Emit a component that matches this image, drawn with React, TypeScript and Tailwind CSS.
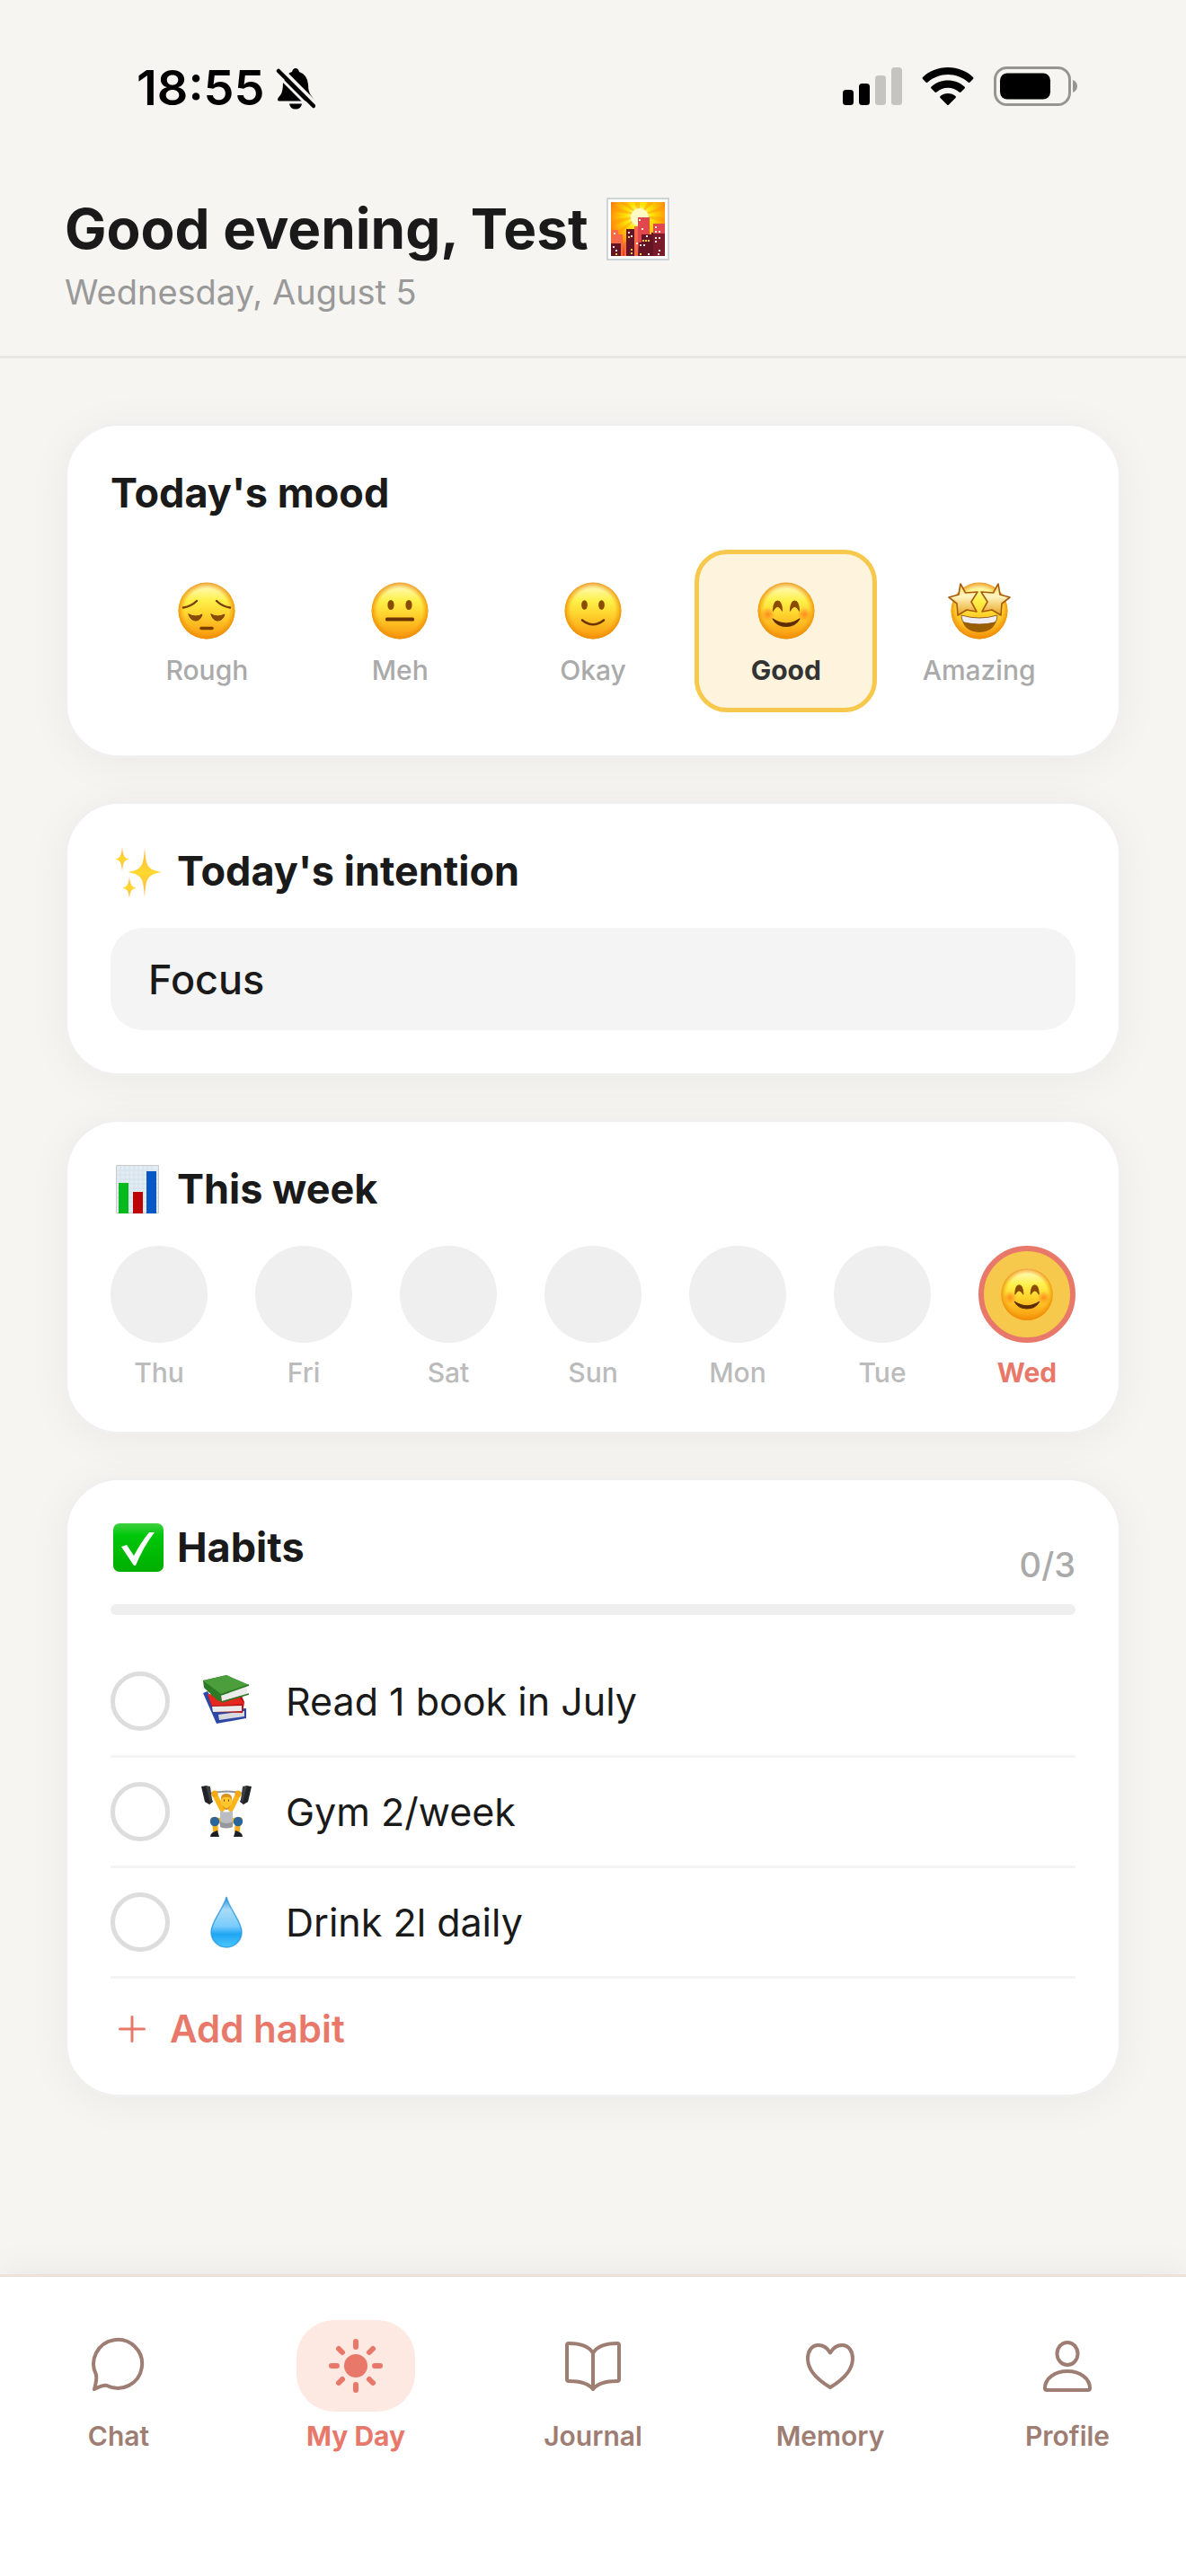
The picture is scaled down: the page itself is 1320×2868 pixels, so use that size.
import { useState, type ReactNode } from "react"

type MoodName = "Rough" | "Meh" | "Okay" | "Good" | "Amazing"

const moods: MoodName[] = ["Rough", "Meh", "Okay", "Good", "Amazing"]
const days = ["Thu", "Fri", "Sat", "Sun", "Mon", "Tue", "Wed"]

const features: Record<MoodName, ReactNode> = {
  Rough: (
    <g fill="none" stroke="#7a3f00" strokeLinecap="round">
      <path d="M10 32.500Q19 31 25 25M62 32.500Q53 31 47 25" strokeWidth="2.4" />
      <path d="M16 40Q24 44 31 40Q29 47 24 47Q18 47 16 40ZM41 40Q48 44 56 40Q54 47 48 47Q43 47 41 40Z" fill="#8a4c02" strokeWidth="1" />
      <path d="M30 55.500h12" strokeWidth="3.600" />
    </g>
  ),
  Meh: (
    <g fill="#8a4c02">
      <ellipse cx="26" cy="29.500" rx="3.600" ry="5.600" />
      <ellipse cx="46" cy="29.500" rx="3.600" ry="5.600" />
      <rect x="20" y="43.500" width="32" height="4" rx="1.500" fill="#6b3400" />
    </g>
  ),
  Okay: (
    <g fill="#8a4c02">
      <ellipse cx="26.500" cy="29.500" rx="3.400" ry="5.200" />
      <ellipse cx="45.500" cy="29.500" rx="3.400" ry="5.200" />
      <path d="M24 46.500Q36 56 48 46.500" fill="none" stroke="#6b3400" strokeWidth="2.600" strokeLinecap="round" />
    </g>
  ),
  Good: (
    <g>
      <circle cx="15.500" cy="40" r="8" fill="url(#blush)" />
      <circle cx="56.500" cy="40" r="8" fill="url(#blush)" />
      <path d="M21.500 36Q22 25 26.500 25Q31 25 31.500 36Q26.500 27 21.500 36ZM40.500 36Q41 25 45.500 25Q50 25 50.500 36Q45.500 27 40.500 36Z" fill="#8a4c02" stroke="#8a4c02" strokeWidth="1.200" strokeLinejoin="round" />
      <path d="M21 45Q36 55 51 45Q46 53.500 36 53.500Q26 53.500 21 45Z" fill="#5d2d00" stroke="#5d2d00" strokeWidth="1.200" strokeLinejoin="round" />
    </g>
  ),
  Amazing: (
    <g>
      <path d="M16 41Q36 47 56 41Q55 59 36 60Q17 59 16 41Z" fill="#9a5f06" />
      <path d="M16 41Q36 47 56 41Q56 47 53 49Q36 53 19 49Q16 47 16 41Z" fill="#eeeef4" stroke="#8a4c02" strokeWidth=".8" />
      <path d="M15 6L20.500 16L34 15L27 26L33 37L22 35L12 41L11 28L2 21L13 18Z" fill="url(#star)" stroke="#a85a0c" strokeWidth="1.600" strokeLinejoin="round" />
      <path d="M57 6L51.500 16L38 15L45 26L39 37L50 35L60 41L61 28L70 21L59 18Z" fill="url(#star)" stroke="#a85a0c" strokeWidth="1.600" strokeLinejoin="round" />
    </g>
  ),
}

function EmojiGradients() {
  return (
    <svg className="absolute size-0" aria-hidden="true">
      <defs>
        <linearGradient id="face" x1="0" y1="0" x2="0" y2="1">
          <stop offset="0" stopColor="#fffbd0" />
          <stop offset=".32" stopColor="#fff04a" />
          <stop offset=".55" stopColor="#ffd52f" />
          <stop offset="1" stopColor="#f8940c" />
        </linearGradient>
        <radialGradient id="rim">
          <stop offset=".78" stopColor="#f59a0b" stopOpacity="0" />
          <stop offset="1" stopColor="#ec8a08" stopOpacity=".85" />
        </radialGradient>
        <radialGradient id="blush">
          <stop offset="0" stopColor="#ff7a1a" stopOpacity=".8" />
          <stop offset="1" stopColor="#ff7a1a" stopOpacity="0" />
        </radialGradient>
        <linearGradient id="star" x1="0" y1="0" x2="0" y2="1">
          <stop offset="0" stopColor="#ffdf66" />
          <stop offset=".4" stopColor="#fff4c0" />
          <stop offset="1" stopColor="#e8a31c" />
        </linearGradient>
        <radialGradient id="sky" cx=".52" cy=".28" r=".8">
          <stop offset=".1" stopColor="#fffbb0" />
          <stop offset=".3" stopColor="#ffe400" />
          <stop offset=".6" stopColor="#ffa00a" />
          <stop offset=".9" stopColor="#f4400a" />
        </radialGradient>
        <linearGradient id="check" x1="0" y1="0" x2="0" y2="1">
          <stop offset="0" stopColor="#3fd03f" />
          <stop offset=".25" stopColor="#00c70a" />
          <stop offset="1" stopColor="#00ad00" />
        </linearGradient>
        <linearGradient id="sparkle" x1="0" y1="0" x2="0" y2="1">
          <stop offset="0" stopColor="#ffb13b" />
          <stop offset=".5" stopColor="#ffd92e" />
          <stop offset="1" stopColor="#ffb155" />
        </linearGradient>
        <linearGradient id="drop" x1="0" y1="0" x2="0" y2="1">
          <stop offset="0" stopColor="#2a93d8" />
          <stop offset=".25" stopColor="#a9dcf7" />
          <stop offset=".58" stopColor="#7accfb" />
          <stop offset=".74" stopColor="#1fa6f4" />
          <stop offset="1" stopColor="#4cc6fa" />
        </linearGradient>
      </defs>
    </svg>
  )
}

function Face({ mood, className }: { mood: MoodName; className: string }) {
  return (
    <svg viewBox="0 0 72 72" className={className} aria-hidden="true">
      <circle cx="36" cy="36" r="31.500" fill="url(#face)" />
      <circle cx="36" cy="36" r="31.500" fill="url(#rim)" />
      {features[mood]}
    </svg>
  )
}

function CityPicture() {
  return (
    <svg viewBox="0 0 70 70" className="size-[70px]" aria-hidden="true">
      <rect x="1" y="1" width="68" height="68" fill="#fff" stroke="#c3cccf" strokeWidth="1.600" />
      <rect x="5" y="5" width="60" height="60" fill="url(#sky)" />
      <path
        d="M37 20L5 8V15ZM37 20L14 5H22ZM37 20L31 5H37ZM37 20L46 5H53ZM37 20L65 8V14ZM37 20L65 22V28ZM37 20L5 25V32ZM37 20L5 42V50Z"
        fill="#ff8a0a"
        opacity=".4"
      />
      <circle cx="37" cy="22" r="10" fill="#fffbc4" />
      <path d="M6 36h7v5h5v24H5ZM20 50h5v15h-5ZM31 32h4v33h-4Z" fill="#f4694a" />
      <path d="M35 22h13v43H35ZM52 29h13v36H52Z" fill="#e2474f" />
      <path d="M5 51h11v14H5ZM22 35h9v30h-9ZM36 50h3v-9h11v-2h2v2h13v24H35Z" fill="#641525" />
      <path d="M52 40h13v25H52Z" fill="#7a1a2a" />
      <path
        d="M36 24h2v2h-2ZM39 34h2v2h-2ZM54 32h2v2h-2ZM54 37h2v2h-2ZM58 37h2v2h-2ZM8 39h2v2H8ZM24 38h2v2h-2ZM27 42h2v2h-2ZM33 50h2v2h-2ZM44 42h2v2h-2ZM54 44h2v2h-2ZM58 44h2v2h-2ZM54 48h2v2h-2ZM37 52h2v2h-2ZM41 52h2v2h-2ZM7 54h2v2H7ZM10 58h2v2h-2ZM58 58h2v2h-2ZM46 62h2v2h-2ZM57 62h2v2h-2Z"
        fill="#ffe9e0"
      />
      <path d="M24 43h2v2h-2ZM40 47h2v2h-2ZM43 47h2v2h-2ZM46 47h2v2h-2ZM27 57h2v2h-2ZM27 61h2v2h-2ZM10 62h2v2h-2ZM37 62h2v2h-2Z" fill="#f5d33c" />
    </svg>
  )
}

function Sparkles() {
  return (
    <svg viewBox="0 0 60 60" className="size-[60px]" fill="url(#sparkle)" aria-hidden="true">
      <path d="M38 4C39.500 25 41 28 57 31C41 34 39.500 37 38 59C36.500 37 35 34 19 31C35 28 36.500 25 38 4Z" />
      <path d="M13 3C14 13 15 15 21 16.500C15 18 14 20 13 30C12 20 11 18 5 16.500C11 15 12 13 13 3Z" />
      <path d="M21 36C22 45 23 47 29 48.500C23 50 22 52 21 60C20 52 19 50 13 48.500C19 47 20 45 21 36Z" />
    </svg>
  )
}

function BarChart() {
  return (
    <svg viewBox="0 0 60 60" className="size-[60px]" aria-hidden="true">
      <path d="M6.500 3.500h47v53h-47Z" fill="#e2ebf2" stroke="#cbcbcb" />
      <path d="M11 4v52M16 4v52M21 4v52M26 4v52M31 4v52M36 4v52M41 4v52M46 4v52M7 9h46M7 14h46M7 19h46M7 24h46M7 29h46M7 34h46M7 39h46M7 44h46M7 49h46" stroke="#cfdfea" strokeWidth=".8" />
      <path d="M9 23h11v34H9Z" fill="#06b91c" />
      <path d="M25 33h11v24H25Z" fill="#bd0404" />
      <path d="M40 10h11v47H40Z" fill="#0757c4" />
    </svg>
  )
}

function CheckMark() {
  return (
    <svg viewBox="0 0 60 60" className="size-[60px]" aria-hidden="true">
      <rect x="3" y="3" width="56" height="54" rx="7" fill="url(#check)" />
      <path d="M12 29L18 27L26 39Q34 24 43 13L49 13Q36 30 28 50H26Z" fill="#fff" />
    </svg>
  )
}

function Books() {
  return (
    <svg viewBox="0 0 66 66" className="size-[66px]" aria-hidden="true">
      <path d="M7 24L12 22L24 43L55 41L55 52L22 58Z" fill="#2c47a8" />
      <path d="M24 48L53 44V50L25 54Z" fill="#d9dade" />
      <path d="M12 26L50 27L53 34L51 46L19 45Z" fill="#b81414" />
      <path d="M12 25L46 27L53 36L17 38Z" fill="#e5281f" />
      <path d="M17 39L50 38V44L18 45Z" fill="#eceaea" />
      <path d="M7 10L33 4L58 15L27 26L28 34L23 32L8 18Z" fill="#2c7a26" />
      <path d="M7 10L33 4L58 15L27 25Z" fill="#4c9e3d" />
      <path d="M27 26L55 17L57 25L28 33Z" fill="#ececea" />
      <path d="M28 34L58 25M27 26L58 15" stroke="#2c7a26" strokeWidth="1.800" />
    </svg>
  )
}

function Lifter() {
  return (
    <svg viewBox="0 0 66 66" className="size-[66px]" aria-hidden="true">
      <path d="M13 13Q33 8 53 13" fill="none" stroke="#8f9499" strokeWidth="1.800" />
      <path d="M5 5L11 4L18 22L14 25L9 22ZM61 5L55 4L48 22L52 25L57 22Z" fill="#202226" />
      <path d="M10 4L15 5L17 20L15 24ZM56 4L51 5L49 20L51 24Z" fill="#3a3d42" />
      <path d="M20 14L28 30M46 14L38 30" stroke="#fbb41a" strokeWidth="6" strokeLinecap="round" />
      <circle cx="20" cy="13" r="3.600" fill="#f3a712" />
      <circle cx="46" cy="13" r="3.600" fill="#f3a712" />
      <path d="M18 42L26 43M48 42L40 43M20 44L21 54M46 44L45 54" stroke="#f7ae1b" strokeWidth="6" strokeLinecap="round" />
      <path d="M26 32Q33 35 40 32L40 44Q42 50 36 51H30Q24 50 26 44Z" fill="#b9bcc1" />
      <path d="M26 50L26 44Q33 48 40 44L40 50Q33 53 26 50Z" fill="#94979c" />
      <ellipse cx="33" cy="21.500" rx="6.200" ry="8" fill="#ffc62e" />
      <path d="M27 20Q26 13 33 13Q40 13 39 20Q37 16 33 17Q29 16 27 20ZM28 25Q33 33 38 25Q36 31 33 31Q30 31 28 25Z" fill="#d89420" />
      <path d="M30 20.500h1M35 20.500h1" stroke="#6b3400" strokeWidth="2" />
      <circle cx="20" cy="44" r="5.200" fill="#2a669b" />
      <circle cx="46" cy="44" r="5.200" fill="#2a669b" />
      <path d="M15 61Q15 56 23 54L25 61ZM51 61Q51 56 43 54L41 61Z" fill="#1d2026" />
    </svg>
  )
}

function Drop() {
  return (
    <svg viewBox="0 0 66 66" className="size-[66px]" aria-hidden="true">
      <path d="M33 5C36 18 50 32 50 44A17 17 0 0 1 16 44C16 32 30 18 33 5Z" fill="url(#drop)" />
      <path d="M33 5C36 18 50 32 50 44A17 17 0 0 1 16 44C16 32 30 18 33 5Z" fill="none" stroke="#1790dd" strokeWidth="1.500" opacity=".7" />
    </svg>
  )
}

function StatusBar() {
  return (
    <div className="flex h-[177px] items-start justify-between pt-[66px] pr-[120px] pl-[152px]">
      <div className="flex items-center gap-3">
        <span className="text-[54px] leading-[63px] font-semibold text-black">18:55</span>
        <svg viewBox="0 0 44 48" className="h-[48px] w-[44px]" aria-label="Silent mode">
          <path d="M14 8Q16 6.500 18 6Q19 2 22 2Q25 2 26 6Q35 9 36 20Q36 28 39 32Q42 35 42 37.500Q42 38.500 41 38.500H4Q2 38.500 2 37Q2 35 5 32Q8 28 8 18Z" />
          <path d="M15 41.500h14Q28 47.500 22 47.500Q16 47.500 15 41.500Z" />
          <path d="M5 1.500L45 41.500" stroke="#f6f5f1" strokeWidth="4" />
          <path d="M3 5L42 44" stroke="#000" strokeWidth="4.500" strokeLinecap="round" />
          <path d="M0 8L38 46" stroke="#f6f5f1" strokeWidth="3" />
        </svg>
      </div>
      <div className="flex items-center gap-[22px] pt-2">
        <svg viewBox="0 0 66 44" className="h-[44px] w-[66px]" aria-label="Signal">
          <rect x="0" y="26" width="12" height="17" rx="3.500" />
          <rect x="18" y="19" width="12" height="24" rx="3.500" />
          <rect x="36" y="10" width="12" height="33" rx="3.500" fill="#c5c4c1" />
          <rect x="54" y="1" width="12" height="42" rx="3.500" fill="#c5c4c1" />
        </svg>
        <svg viewBox="0 0 58 44" className="h-[44px] w-[58px]" aria-label="Wi-Fi">
          <path d="M29 1C40 1 50 5 57 12Q58 13 57 14L53.500 17.500Q52.500 18.500 51.500 17.500C45 12 37.500 9 29 9S13 12 6.500 17.500Q5.500 18.500 4.500 17.500L1 14Q0 13 1 12C8 5 18 1 29 1Z" />
          <path d="M29 15.500C36 15.500 42.500 18 47.500 22.500Q48.500 23.500 47.500 24.500L43.500 28.500Q42.500 29.300 41.500 28.500C38 25.300 33.700 23.700 29 23.700S20 25.300 16.500 28.500Q15.500 29.300 14.500 28.500L10.500 24.500Q9.500 23.500 10.500 22.500C15.500 18 22 15.500 29 15.500Z" />
          <path d="M29 30Q34 30 37.500 33Q38.500 34 37.500 35L30 42.500Q29 43.500 28 42.500L20.500 35Q19.500 34 20.500 33Q24 30 29 30Z" />
        </svg>
        <svg viewBox="0 0 94 44" className="h-[44px] w-[94px]" aria-label="Battery">
          <rect x="1.500" y="1.500" width="83" height="41" rx="13" fill="none" stroke="#979592" strokeWidth="3" />
          <rect x="7" y="7.500" width="56" height="29" rx="8" />
          <path d="M88 15Q93 17 93 22Q93 27 88 29Z" fill="#979592" />
        </svg>
      </div>
    </div>
  )
}

function Card({ children }: { children: ReactNode }) {
  return (
    <section className="rounded-[60px] border-[3px] border-[#f0f0f0] bg-white p-12 shadow-[0_6px_48px_rgba(0,0,0,0.05)]">
      {children}
    </section>
  )
}

function CardTitle({ icon, children }: { icon?: ReactNode; children: ReactNode }) {
  return (
    <h2 className="flex h-[54px] items-center gap-[14px] text-[45px] leading-[54px] font-bold">
      {icon}
      {children}
    </h2>
  )
}

const habits = [
  { id: "read", name: "Read 1 book in July", icon: <Books /> },
  { id: "gym", name: "Gym 2/week", icon: <Lifter /> },
  { id: "water", name: "Drink 2l daily", icon: <Drop /> },
]

const tabs = [
  {
    name: "Chat",
    icon: <path d="M7 42A27 27 0 1 1 19 54Q15 53 5 58Q8 47 7 42Z" />,
  },
  {
    name: "My Day",
    icon: (
      <>
        <circle cx="32" cy="32" r="11" fill="currentColor" />
        <path d="M32 5v6M32 53v6M5 32h6M53 32h6M13 13l4 4M47 47l4 4M13 51l4-4M47 17l4-4" strokeWidth="6" />
      </>
    ),
  },
  {
    name: "Journal",
    icon: (
      <path d="M32 18Q26 7 5 7Q3 7 3 9V47Q3 49 5 49Q25 49 32 58Q39 49 59 49Q61 49 61 47V9Q61 7 59 7Q38 7 32 18ZM32 18V58" />
    ),
  },
  {
    name: "Memory",
    icon: <path d="M32 17.500Q27 9 19 9C11 9 7 16 7 24C7 37 17 47 32 56C47 47 57 37 57 24C57 16 53 9 45 9Q37 9 32 17.500Z" />,
  },
  {
    name: "Profile",
    icon: (
      <>
        <ellipse cx="32" cy="18.500" rx="11.500" ry="12.500" />
        <path d="M9 59Q7 59 7 57C7 46 18 38 32 38S57 46 57 57Q57 59 55 59Z" />
      </>
    ),
  },
]

export default function App() {
  const [mood, setMood] = useState<MoodName>("Good")
  const [done, setDone] = useState<string[]>([])

  const toggle = (id: string) =>
    setDone((prev) => (prev.includes(id) ? prev.filter((d) => d !== id) : [...prev, id]))

  return (
    <div className="flex min-h-screen flex-col bg-[#f6f5f1] font-[Inter,'Liberation_Sans',sans-serif] text-[#1a1a1a]">
      <EmojiGradients />

      <header className="border-b-[3px] border-[#e8e7e4]">
        <StatusBar />
        <div className="px-[72px] pt-9 pb-12">
          <h1 className="flex items-center gap-5 text-[62px] leading-[84px] font-bold">
            Good evening, Test
            <CityPicture />
          </h1>
          <p className="mt-[6px] text-[38px] leading-[45px] text-[#999999]">Wednesday, August 5</p>
        </div>
      </header>

      <main className="flex flex-1 flex-col gap-12 px-[72px] pt-[72px] pb-12">
        {/* Mood */}
        <Card>
          <CardTitle>Today's mood</CardTitle>
          <div className="mt-9 grid grid-cols-5">
            {moods.map((m) => (
              <button
                key={m}
                type="button"
                aria-pressed={mood === m}
                onClick={() => setMood(m)}
                className={`mx-[6px] flex flex-col items-center gap-3 rounded-[36px] border-[5px] pt-[27px] pb-6 text-[30px] leading-9 ${
                  mood === m
                    ? "border-[#f6c84c] bg-[#fef3dc] font-bold text-[#333333]"
                    : "border-transparent font-medium text-[#aaaaaa]"
                }`}
              >
                <Face mood={m} className="size-[72px]" />
                {m}
              </button>
            ))}
          </div>
        </Card>

        {/* Intention */}
        <Card>
          <CardTitle icon={<Sparkles />}>Today's intention</CardTitle>
          <input
            type="text"
            aria-label="Today's intention"
            defaultValue="Focus"
            className="mt-9 block h-[114px] w-full rounded-[36px] bg-[#f4f4f4] px-[42px] text-[45px] font-medium outline-none"
          />
        </Card>

        {/* Week */}
        <Card>
          <CardTitle icon={<BarChart />}>This week</CardTitle>
          <ul className="mt-9 flex justify-between">
            {days.map((day) => (
              <li key={day} className="flex w-[108px] flex-col items-center gap-[15px]">
                {day === "Wed" ? (
                  <div className="flex size-[108px] items-center justify-center rounded-full border-[6px] border-[#e8796a] bg-[#f6c84c]">
                    <Face mood={mood} className="size-[66px]" />
                  </div>
                ) : (
                  <div className="size-[108px] rounded-full bg-[#efefef]" />
                )}
                <span
                  className={`text-[30px] leading-9 ${
                    day === "Wed" ? "font-bold text-[#e8796a]" : "font-medium text-[#bbbbbb]"
                  }`}
                >
                  {day}
                </span>
              </li>
            ))}
          </ul>
        </Card>

        {/* Habits */}
        <Card>
          <div className="flex h-[69px] justify-between">
            <CardTitle icon={<CheckMark />}>Habits</CardTitle>
            <span className="self-end text-[38px] leading-[45px] font-medium text-[#aaaaaa]">
              {done.length}/{habits.length}
            </span>
          </div>
          <div className="mt-[21px] h-3 overflow-hidden rounded-full bg-[#efefef]">
            <div className="h-full bg-[#e8796a]" style={{ width: `${(done.length / habits.length) * 100}%` }} />
          </div>
          <ul className="mt-9">
            {habits.map((habit) => (
              <li key={habit.id} className="flex items-center border-b-[3px] border-[#f4f4f4] py-[27px]">
                <input
                  id={habit.id}
                  type="checkbox"
                  checked={done.includes(habit.id)}
                  onChange={() => toggle(habit.id)}
                  className="size-[66px] shrink-0 appearance-none rounded-full border-[5px] border-[#dddddd] checked:border-[#e8796a] checked:bg-[#e8796a]"
                />
                <label htmlFor={habit.id} className="flex flex-1 items-center gap-[33px] pl-[30px] text-[43px] leading-[54px]">
                  {habit.icon}
                  {habit.name}
                </label>
              </li>
            ))}
          </ul>
          <button type="button" className="mt-[30px] flex items-center gap-[18px] text-[42px] leading-[51px] font-semibold text-[#e8796a]">
            <svg viewBox="0 0 48 48" className="size-12" stroke="currentColor" strokeWidth="3" strokeLinecap="round" aria-hidden="true">
              <path d="M24 10.500v27M10.500 24h27" />
            </svg>
            Add habit
          </button>
        </Card>
      </main>

      <nav className="flex border-t-[3px] border-[#eee1dc] bg-white pt-12 pb-[138px] shadow-[0_-6px_36px_rgba(0,0,0,0.05)]">
        {tabs.map(({ name, icon }) => {
          const active = name === "My Day"
          return (
            <a
              key={name}
              href="#"
              aria-current={active ? "page" : undefined}
              className={`flex flex-1 flex-col items-center gap-[9px] text-[30px] leading-9 ${
                active ? "font-bold text-[#e8796a]" : "font-semibold text-[#9e7d73]"
              }`}
            >
              <span className={`flex h-[102px] w-[132px] items-center justify-center rounded-[42px] ${active ? "bg-[#fee8e2]" : ""}`}>
                <svg
                  viewBox="0 0 64 64"
                  className="size-16"
                  fill="none"
                  stroke="currentColor"
                  strokeWidth="4"
                  strokeLinecap="round"
                  strokeLinejoin="round"
                  aria-hidden="true"
                >
                  {icon}
                </svg>
              </span>
              {name}
            </a>
          )
        })}
      </nav>
    </div>
  )
}
